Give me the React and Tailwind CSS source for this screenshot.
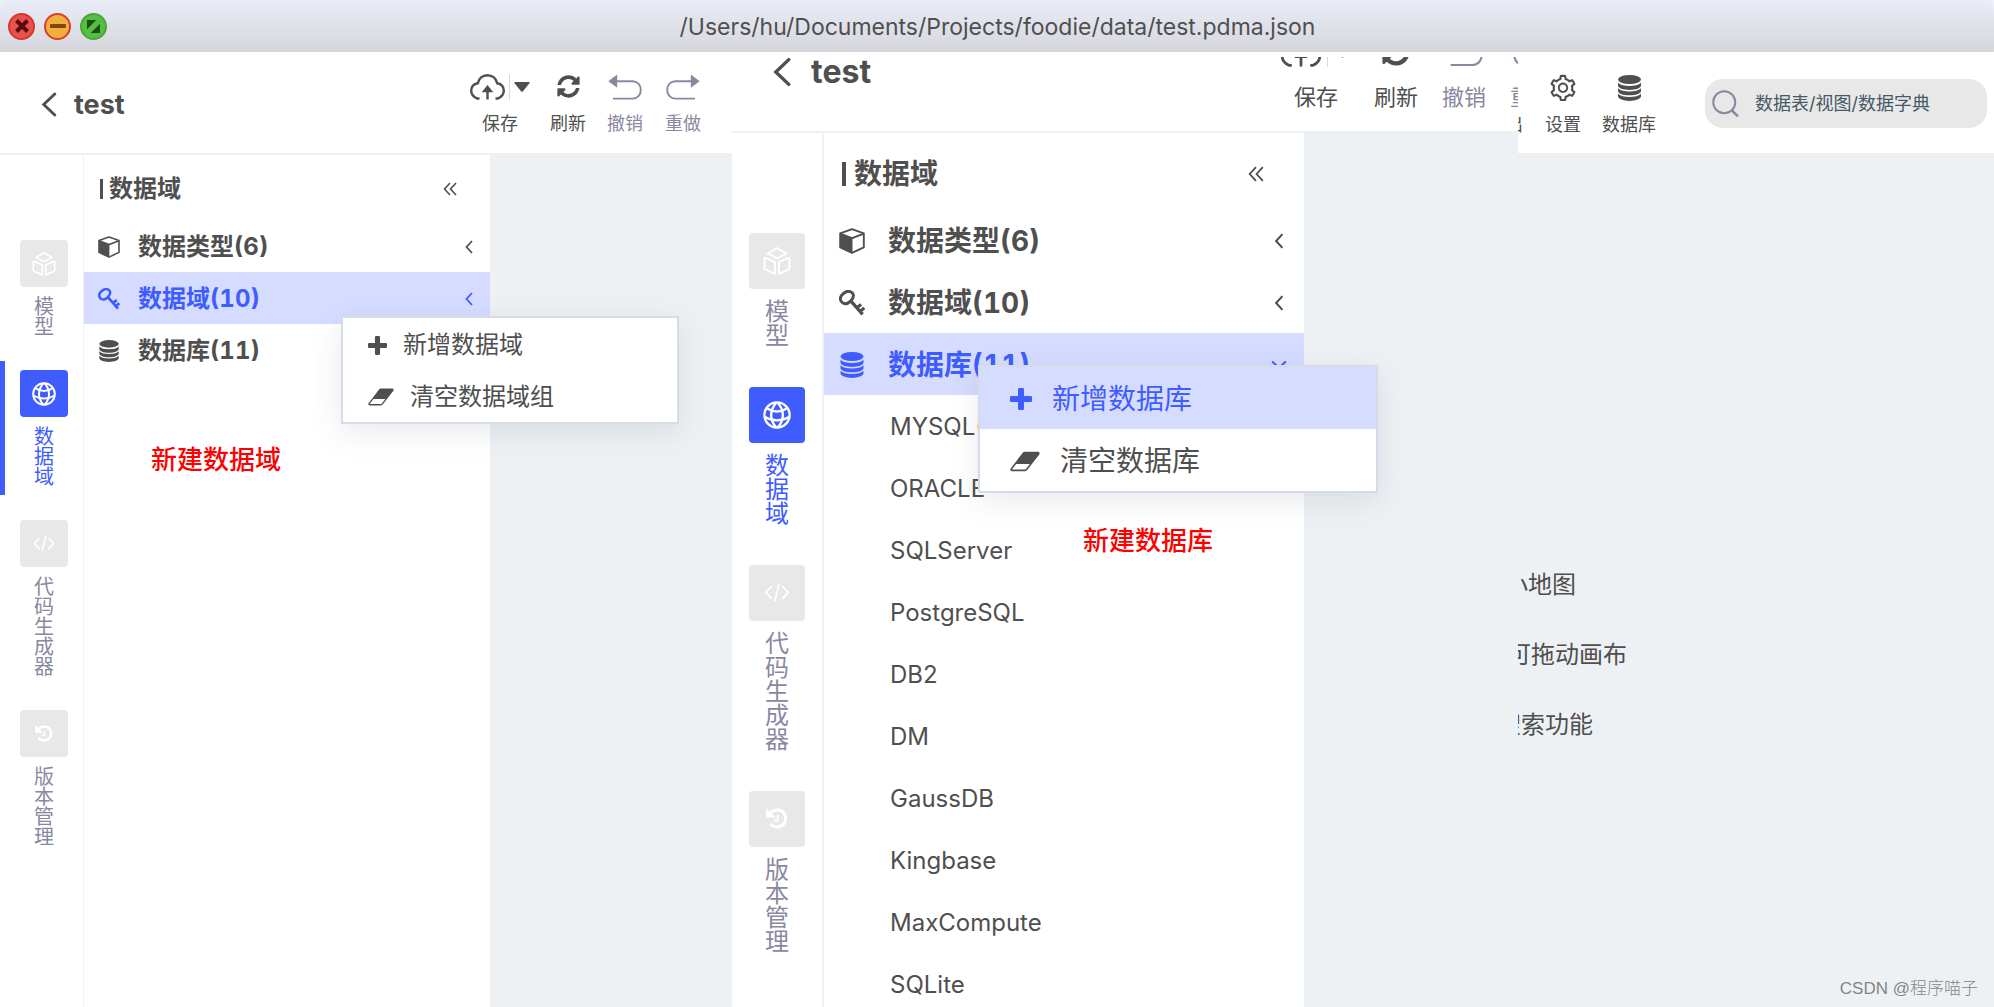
import clsx from "clsx";
import { FaSyncAlt } from "react-icons/fa";
import { AiOutlineSetting } from "react-icons/ai";

/* ── Icons ─────────────────────────────────────────────────────────────────── */

function DatabaseIcon({ className }) {
  return (
    <svg viewBox="0 0 22 24" fill="currentColor" className={className}>
      <ellipse cx="11" cy="4.2" rx="10.6" ry="4.2" />
      <path d="M.4 7.2c2 2.2 6 3 10.600 3s8.600-.8 10.600-3v2.600c0 2.300-4.800 4.100-10.600 4.100S.4 12.100.4 9.800z" />
      <path d="M.4 12.300c2 2.200 6 3 10.600 3s8.600-.8 10.600-3v2.400c0 2.300-4.800 4.100-10.600 4.100S.4 17 .4 14.700z" />
      <path d="M.4 17.300c2 2.200 6 3 10.600 3s8.600-.8 10.600-3v2.400c0 2.300-4.800 4.200-10.600 4.200S.4 22 .4 19.700z" />
    </svg>
  );
}

function CubeIcon({ className }) {
  return (
    <svg viewBox="0 0 22 22" className={className}>
      <path d="M11 .9 21 4.600v11.800L11 21.100 1 16.400V4.600z" fill="none" stroke="currentColor" strokeWidth="1.600" strokeLinejoin="round" />
      <path d="M1 4.800 11 8.600 21 4.800" fill="none" stroke="currentColor" strokeWidth="1.600" />
      <path d="M1 5l10.400 3.800v12.300L1 16.400z" fill="currentColor" />
    </svg>
  );
}

function KeyIcon({ className }) {
  return (
    <svg viewBox="0 0 22 22" fill="none" stroke="currentColor" className={className}>
      <path d="M5.500 1.800C8 .4 11.200 1.300 12 3.600c.8 2.400-.6 4.200-2.200 5.800-1.600 1.600-4.200 2.800-6.400 1.600C.7 9.400.6 6.600 2.200 4.600 3.200 3.400 4.200 2.500 5.500 1.800z" strokeWidth="2.500" />
      <path d="M10.300 9.600 20 20.600M15.800 14.400l3-2.200M18.400 17.600l3-2.400" strokeWidth="2.700" />
    </svg>
  );
}

function PlusIcon({ className }) {
  return (
    <svg viewBox="0 0 20 20" fill="currentColor" className={className}>
      <path d="M8.500 0h3q1.200 0 1.200 1.200v6.100h6.100Q20 7.300 20 8.500v3q0 1.200-1.200 1.200h-6.100v6.100q0 1.200-1.200 1.200h-3q-1.200 0-1.200-1.200v-6.100H1.200Q0 12.700 0 11.500v-3q0-1.200 1.200-1.200h6.100V1.200Q7.300 0 8.500 0z" />
    </svg>
  );
}

function EraserIcon({ className }) {
  return (
    <svg viewBox="0 0 27 18" className={className}>
      <path d="M13.300 1h11.900c.7 0 1 .6.600 1.200L14.900 16.200c-.4.500-.9.800-1.600.8H1.900c-.8 0-1.200-.6-.7-1.200L11.800 1.800c.4-.5.900-.8 1.500-.8z" fill="none" stroke="currentColor" strokeWidth="1.400" />
      <path d="M13.300 1h11.900c.7 0 1 .6.600 1.200L18.500 11.200H5L11.800 1.800c.4-.5.900-.8 1.500-.8z" fill="currentColor" />
    </svg>
  );
}

function ModelIcon({ className }) {
  return (
    <svg viewBox="0 0 24 24" fill="none" stroke="currentColor" strokeWidth="1.700" strokeLinejoin="round" className={className}>
      <path d="M12 .9 20 5.600 12 9.700 4 5.600z" />
      <path d="M2.200 9.400 10.300 13v10L2.200 19.400q-.9-.4-.9-1.400v-8q0-.9.900-.6z" />
      <path d="M21.800 9.400 13.700 13v10l8.100-3.600q.9-.4.900-1.400v-8q0-.9-.9-.6z" />
    </svg>
  );
}

function GlobeIcon({ className }) {
  return (
    <svg viewBox="0 0 24 24" fill="none" stroke="currentColor" strokeWidth="2" className={className}>
      <circle cx="12" cy="12" r="10.800" />
      <path d="M11.500 1.200C5.500 8 5.500 16.500 11.500 22.800M12.500 1.200c6 6.800 6 15.300 0 21.600" />
      <path d="M3.200 6.200c5.500 3.500 12.100 3.500 17.600 0M1.200 13.500c7 4 14.600 4 21.600 0" />
    </svg>
  );
}

function CodeIcon({ className }) {
  return (
    <svg viewBox="0 0 24 24" fill="none" stroke="currentColor" strokeWidth="1.500" className={className}>
      <path d="M7.500 6 2.500 11.500l5 5.500M16.500 6l5 5.500-5 5.500M13.800 4l-3.600 15" />
    </svg>
  );
}

function HistoryIcon({ className }) {
  return (
    <svg viewBox="0 0 24 24" fill="none" stroke="currentColor" className={className}>
      <path d="M5 5.500C9 1 16.500 1 19.600 5.500s2.400 10.500-2.200 13.500-9.900 1.800-12.600-2" strokeWidth="3.400" />
      <path d="M1 2v7.500h8z" fill="currentColor" strokeWidth="1.500" />
      <path d="M12.800 7.500v6.300H9" strokeWidth="2" />
    </svg>
  );
}

function CloudIcon({ className }) {
  return (
    <svg viewBox="0 0 35 26" className={className}>
      <path d="M9.500 24.500H7C3.800 23 1.200 20.500 1.200 16.800c0-4.200 2.800-6.900 6.600-7.600C8.800 4.500 12.500 1.200 17.500 1.200s8.700 3.300 9.700 8c3.800.7 6.600 3.400 6.600 7.600 0 3.700-2.600 6.200-5.800 7.700h-2.500" fill="none" stroke="currentColor" strokeWidth="2.400" />
      <path d="M17.500 11l5.800 7.200h-4.600v7.300h-2.400v-7.300h-4.600z" fill="currentColor" />
    </svg>
  );
}

function UndoIcon({ className }) {
  return (
    <svg viewBox="0 0 34 26" className={className}>
      <path d="M8 7.200h16.500c4.800 0 8.300 3.700 8.300 8.700s-3.500 8.700-8.300 8.700H5" fill="none" stroke="currentColor" strokeWidth="1.900" />
      <path d="M9.200.5v13.300L.3 7.200z" fill="currentColor" />
    </svg>
  );
}

function BackIcon({ className }) {
  return (
    <svg viewBox="0 0 16 26" fill="none" stroke="currentColor" strokeWidth="3" strokeLinecap="round" className={className}>
      <path d="M14 2 2.500 13 14 24" />
    </svg>
  );
}

function ChevronIcon({ className }) {
  return (
    <svg viewBox="0 0 8 14" fill="none" stroke="currentColor" strokeWidth="1.800" className={className}>
      <path d="M7 1 1.500 7 7 13" />
    </svg>
  );
}

function CollapseIcon({ className }) {
  return (
    <svg viewBox="0 0 14 14" fill="none" stroke="currentColor" strokeWidth="1.600" className={className}>
      <path d="M7 1 1.500 7 7 13M13 1 7.500 7 13 13" />
    </svg>
  );
}

function SearchIcon({ className }) {
  return (
    <svg viewBox="0 0 26 26" fill="none" stroke="currentColor" strokeWidth="1.900" className={className}>
      <circle cx="11.800" cy="11.800" r="10.600" />
      <path d="M19 19.500l6 6" strokeWidth="2.400" />
    </svg>
  );
}

/* ── Data ──────────────────────────────────────────────────────────────────── */

const NAV = [
  { label: "模型", Icon: ModelIcon },
  { label: "数据域", Icon: GlobeIcon, active: true },
  { label: "代码生成器", Icon: CodeIcon },
  { label: "版本管理", Icon: HistoryIcon, small: true },
];

const TREE = [
  { key: "type", label: "数据类型(6)", Icon: CubeIcon },
  { key: "domain", label: "数据域(10)", Icon: KeyIcon },
  { key: "db", label: "数据库(11)", Icon: DatabaseIcon },
];

const DATABASES = [
  "MYSQL(默认)",
  "ORACLE",
  "SQLServer",
  "PostgreSQL",
  "DB2",
  "DM",
  "GaussDB",
  "Kingbase",
  "MaxCompute",
  "SQLite",
];

/* ── Shared parts; `large` is the zoomed-in window ─────────────────────────── */

function BackTitle({ large, className }) {
  return (
    <button className={clsx("flex flex-none items-center font-bold", large ? "gap-[20px] text-[32px] leading-[40px]" : "gap-[17px] text-[27px] leading-[34px]", className)}>
      <BackIcon className={large ? "h-[30px] w-[18px]" : "h-[25px] w-[16px]"} />
      test
    </button>
  );
}

function Tool({ label, muted, large, className, children }) {
  return (
    <button
      className={clsx(
        "flex flex-none flex-col items-center whitespace-nowrap",
        large ? "gap-[15px] text-[22px] leading-[30px]" : "gap-[12px] text-[18px] leading-[24px]",
        muted && "text-[#8a88a0]",
        className
      )}
    >
      <span className={clsx("flex items-center", large ? "h-[30px]" : "h-[26px]")}>{children}</span>
      {label}
    </button>
  );
}

function EditTools({ large }) {
  const arrow = large ? "h-[30px] w-[38px]" : "h-[26px] w-[34px]";
  return (
    <>
      <Tool label="保存" large={large}>
        <CloudIcon className={large ? "h-[30px] w-[42px]" : "h-[26px] w-[35px]"} />
        <span className={clsx("h-full w-px bg-[#d5d9e4]", large ? "mx-[5px]" : "mx-[4px]")} />
        <svg viewBox="0 0 16 10" fill="currentColor" className={large ? "h-[14px] w-[19px]" : "h-[10px] w-[16px]"}>
          <path d="M1 0h14q1 .3.400 1.200L9 9.200q-1 1-2 0L.6 1.200Q0 .3 1 0z" />
        </svg>
      </Tool>
      <Tool label="刷新" large={large} className={large ? "ml-[22px]" : "ml-[20px]"}>
        <FaSyncAlt className={large ? "size-[28px]" : "size-[23px]"} />
      </Tool>
      <Tool label="撤销" large={large} muted className={large ? "ml-[24px]" : "ml-[21px]"}>
        <UndoIcon className={arrow} />
      </Tool>
      <Tool label="重做" large={large} muted className={large ? "ml-[24px]" : "ml-[22px]"}>
        <UndoIcon className={clsx(arrow, "-scale-x-100")} />
      </Tool>
    </>
  );
}

function NavRail({ large }) {
  return (
    <nav
      className={clsx(
        "flex flex-none flex-col border-[#edf1f4] bg-white",
        large ? "w-[92px] gap-[20px] border-r-2 pt-[90px]" : "w-[84px] gap-[16px] border-r pt-[76px]"
      )}
    >
      {NAV.map(({ label, Icon, active, small }) => (
        <button
          key={label}
          className={clsx(
            "flex flex-col items-center",
            large ? "gap-[11px] pt-[10px] pb-[9px]" : "gap-[10px] border-l-[5px] pt-[9px] pb-[8px]",
            active ? "border-[#3f5cff] text-[#3f5cff]" : "border-transparent text-[#8a88a0]"
          )}
        >
          <span
            className={clsx(
              "flex items-center justify-center rounded-[4px] text-white",
              large ? "size-[56px]" : "h-[47px] w-[48px]",
              active ? "bg-[#3f5cff]" : "bg-[#e8e8e8]"
            )}
          >
            <Icon className={small ? (large ? "size-[22px]" : "size-[18px]") : large ? "size-[28px]" : "size-[24px]"} />
          </span>
          <span className={large ? "w-[24px] text-[24px] leading-[24px] break-all" : "w-[20px] text-[20px] leading-[20px] break-all"}>
            {label}
          </span>
        </button>
      ))}
    </nav>
  );
}

function TreePanel({ large, selected, children }) {
  return (
    <div className={clsx("flex flex-none flex-col bg-white", large ? "w-[480px]" : "w-[406px]")}>
      <div
        className={clsx(
          "flex flex-none items-center font-bold",
          large ? "h-[76px] pt-[5px] pr-[40px] pl-[18px] text-[28px]" : "h-[65px] pt-[3px] pr-[33px] pl-[16px] text-[24px]"
        )}
      >
        <span className={large ? "mr-[8px] h-[24px] w-[4px] bg-[#4f4f4f]" : "mr-[6px] h-[20px] w-[3px] bg-[#4f4f4f]"} />
        <h2>数据域</h2>
        <button aria-label="收起" className="ml-auto">
          <CollapseIcon className={large ? "size-[16px]" : "size-[14px]"} />
        </button>
      </div>
      {TREE.map(({ key, label, Icon }) => (
        <button
          key={key}
          className={clsx(
            "flex flex-none items-center pt-[2px] font-bold tabular-nums",
            large ? "h-[62px] gap-[23px] pr-[20px] pl-[15px] text-[28px]" : "h-[52px] gap-[18px] pr-[17px] pl-[14px] text-[24px]",
            selected === key && "bg-[#d5dcff] text-[#3f5cff]"
          )}
        >
          <Icon className={large ? "size-[26px]" : "size-[22px]"} />
          {label}
          <ChevronIcon
            className={clsx("ml-auto", large ? "h-[16px] w-[10px]" : "h-[14px] w-[8px]", large && selected === key && "-rotate-90")}
          />
        </button>
      ))}
      {children}
    </div>
  );
}

function ContextMenu({ large, className, items, active }) {
  return (
    <div role="menu" className={clsx("absolute border-2 border-[#d7dbe8] bg-white shadow-[0_8px_28px_rgba(79,90,110,0.13)]", className)}>
      {items.map(({ label, Icon }, i) => (
        <button
          key={label}
          role="menuitem"
          className={clsx(
            "flex w-full items-center pt-[2px]",
            large ? "h-[62px] gap-[20px] pl-[30px] text-[28px]" : "h-[52px] gap-[16px] pl-[25px] text-[24px]",
            active === i && "bg-[#d5dcff] text-[#3f5cff]"
          )}
        >
          {Icon === PlusIcon ? (
            <PlusIcon className={large ? "size-[22px]" : "size-[19px]"} />
          ) : (
            <Icon className={large ? "h-[21px] w-[30px]" : "h-[18px] w-[26px]"} />
          )}
          {label}
        </button>
      ))}
    </div>
  );
}

/* ── Windows ───────────────────────────────────────────────────────────────── */

function TitleBar() {
  return (
    <header className="flex h-[52px] flex-none items-center rounded-t-[10px] bg-linear-to-b from-[#e9edf8] to-[#d6d6dc] pr-[106px] pl-[8px]">
      <div className="flex flex-none gap-[9px]">
        <button aria-label="关闭" className="flex size-[27px] items-center justify-center rounded-full border-2 border-[#d8352f] bg-[#e5534c]">
          <svg viewBox="0 0 14 14" className="size-[14px]" stroke="#5c0c0c" strokeWidth="4">
            <path d="M1.500 1.500l11 11M12.500 1.500l-11 11" />
          </svg>
        </button>
        <button aria-label="最小化" className="flex size-[27px] items-center justify-center rounded-full border-2 border-[#dc3c2c] bg-[#f1b03c]">
          <span className="h-[4px] w-[16px] rounded-[1px] bg-[#7f4512]" />
        </button>
        <button aria-label="缩放" className="flex size-[27px] items-center justify-center rounded-full border-2 border-[#4da33c] bg-[#55bf43]">
          <svg viewBox="0 0 14 14" className="size-[13px]" fill="#1c4d12">
            <path d="M0 0h10L0 10zM14 14H4L14 4z" />
          </svg>
        </button>
      </div>
      <h1 className="flex-1 pt-[2px] text-center text-[23px]">/Users/hu/Documents/Projects/foodie/data/test.pdma.json</h1>
    </header>
  );
}

function DomainWindow() {
  return (
    <section className="relative flex min-w-0 flex-col">
      <div className="flex h-[103px] flex-none items-center border-b-2 border-[#edf1f4] bg-white pt-[4px] pr-[31px] pl-[41px]">
        <BackTitle />
        <div className="ml-auto flex">
          <EditTools />
        </div>
      </div>
      <div className="flex min-h-0 flex-1">
        <NavRail />
        <TreePanel selected="domain" />
      </div>
      <ContextMenu
        className="top-[264px] left-[341px] w-[338px]"
        items={[
          { label: "新增数据域", Icon: PlusIcon },
          { label: "清空数据域组", Icon: EraserIcon },
        ]}
      />
      <p className="absolute top-[388px] left-[151px] text-[26px] leading-[40px] font-medium text-[#ff0000]">新建数据域</p>
    </section>
  );
}

function DatabaseWindow() {
  return (
    <section className="relative flex min-w-0 flex-col overflow-hidden">
      <div className="flex h-[81px] flex-none items-start border-b-2 border-[#edf1f4] bg-white">
        <BackTitle large className="w-[548px] pl-[41px]" />
        {/* the toolbar is scrolled half out of view */}
        <div className="mt-[5px] flex h-[74px] min-w-0 flex-1 items-end overflow-hidden pb-[19px]">
          <EditTools large />
        </div>
      </div>
      <div className="flex min-h-0 flex-1 bg-[#edf1f4]">
        <NavRail large />
        <TreePanel large selected="db">
          <ul className="pt-[1px]">
            {DATABASES.map((name) => (
              <li key={name} className="pl-[66px] text-[24px] leading-[62px]">
                {name}
              </li>
            ))}
          </ul>
        </TreePanel>
      </div>
      <ContextMenu
        large
        className="top-[313px] left-[246px] w-[400px]"
        active={0}
        items={[
          { label: "新增数据库", Icon: PlusIcon },
          { label: "清空数据库", Icon: EraserIcon },
        ]}
      />
      <p className="absolute top-[469px] left-[351px] text-[26px] leading-[40px] font-medium text-[#ff0000]">新建数据库</p>
    </section>
  );
}

function CanvasWindow() {
  return (
    <section className="flex min-w-0 flex-col">
      <div className="flex h-[101px] flex-none items-center bg-white pr-[7px]">
        <div className="mt-[6px] flex">
          <div className="flex w-[5px] justify-end overflow-hidden">
            <Tool label="导出" />
          </div>
          <Tool label="设置" className="ml-[22px]">
            <AiOutlineSetting className="size-[30px]" />
          </Tool>
          <Tool label="数据库" className="ml-[21px]">
            <DatabaseIcon className="h-[26px] w-[25px]" />
          </Tool>
        </div>
        <label className="mt-[1px] ml-auto flex h-[49px] w-[282px] items-center gap-[16px] rounded-[18px] bg-[#e8e8e8] pl-[7px] text-[#8a88a0]">
          <SearchIcon className="size-[27px] flex-none" />
          <input
            aria-label="搜索"
            placeholder="数据表/视图/数据字典"
            className="w-full min-w-0 bg-transparent text-[18px] outline-none placeholder:text-[#455a64]"
          />
        </label>
      </div>
      <div className="flex flex-1 flex-col text-[24px] leading-[70px] whitespace-nowrap">
        <p className="mt-[397px] flex w-[58px] justify-end overflow-hidden">小地图</p>
        <p className="flex w-[109px] justify-end overflow-hidden">可拖动画布</p>
        <p className="flex w-[75px] justify-end overflow-hidden">搜索功能</p>
        <p className="mt-auto self-end pr-[16px] pb-[4px] font-['Liberation_Sans','Noto_Sans_CJK_SC',sans-serif] text-[17px] leading-[28px] font-light text-[#858585]">
          CSDN @程序喵子
        </p>
      </div>
    </section>
  );
}

export default function App() {
  return (
    <div className="flex h-screen flex-col overflow-hidden bg-[#edf1f4] font-[Inter,'Noto_Sans_CJK_SC',sans-serif] text-[#4f4f4f]">
      <TitleBar />
      <main className="grid min-h-0 flex-1 grid-cols-[minmax(0,732fr)_minmax(0,786fr)_minmax(0,476fr)] grid-rows-[minmax(0,1fr)]">
        <DomainWindow />
        <DatabaseWindow />
        <CanvasWindow />
      </main>
    </div>
  );
}
